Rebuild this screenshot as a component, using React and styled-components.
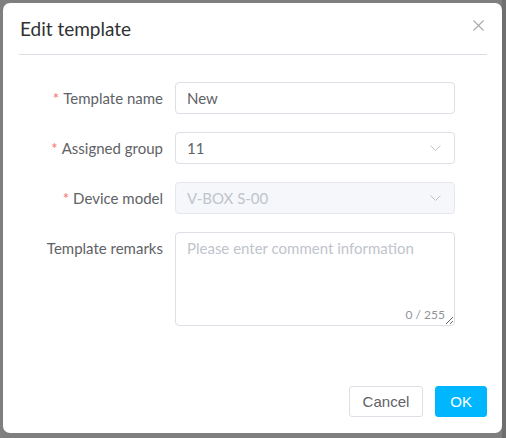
import styled, { createGlobalStyle } from "styled-components";

const GlobalStyle = createGlobalStyle`
  html, body {
    margin: 0;
    padding: 0;
    background: #7f7f7f;
  }
  * {
    box-sizing: border-box;
  }
`;

const fields = [
  { label: "Template name", required: true, kind: "input", value: "New" },
  { label: "Assigned group", required: true, kind: "select", value: "11" },
  { label: "Device model", required: true, kind: "select", value: "V-BOX S-00", disabled: true },
];

const font = `"Source Sans Pro", Lato, "Noto Sans", sans-serif`;

export default function App() {
  return (
    <>
      <GlobalStyle />
      <Backdrop>
        <Dialog>
          <Header>
            <Title>Edit template</Title>
            <CloseButton aria-label="close">
              <svg width="11" height="11" viewBox="0 0 11 11">
                <path d="M0.5 0.5 L10.5 10.5 M10.5 0.5 L0.5 10.5" stroke="#a6a9ad" strokeWidth="1.1" fill="none" />
              </svg>
            </CloseButton>
          </Header>

          <Form>
            {fields.map((f) => (
              <Row key={f.label}>
                <Label required={f.required}>{f.label}</Label>
                {f.kind === "input" ? (
                  <Input defaultValue={f.value} />
                ) : (
                  <Select disabled={f.disabled}>
                    <span>{f.value}</span>
                    <svg width="11" height="6" viewBox="0 0 11 6">
                      <path d="M0.5 0.5 L5.5 5.5 L10.5 0.5" stroke="#c0c4cc" strokeWidth="1" fill="none" />
                    </svg>
                  </Select>
                )}
              </Row>
            ))}
            <Row>
              <Label>Template remarks</Label>
              <AreaWrap>
                <TextArea placeholder="Please enter comment information" />
                <Counter>0 / 255</Counter>
              </AreaWrap>
            </Row>
          </Form>

          <Footer>
            <Button>Cancel</Button>
            <Button primary>OK</Button>
          </Footer>
        </Dialog>
      </Backdrop>
    </>
  );
}

const Backdrop = styled.div`
  width: 506px;
  height: 438px;
  padding: 3px 4px 5px 3px;
  background: #7f7f7f;
  border-right: 4px solid #6f6f6f;
`;

const Dialog = styled.div`
  width: 499px;
  height: 430px;
  background: #ffffff;
  border-radius: 7px;
  display: flex;
  flex-direction: column;
`;

const Header = styled.div`
  position: relative;
  height: 52px;
  margin: 0 15px 0 16px;
  border-bottom: 1px solid #dcdfe6;
  display: flex;
  align-items: center;
`;

const Title = styled.h1`
  margin: 0 0 0 1px;
  font-family: ${font};
  font-weight: 400;
  font-size: 19px;
  color: #303133;
`;

const CloseButton = styled.div`
  position: absolute;
  right: 3px;
  top: 17px;
  width: 11px;
  height: 11px;
  display: flex;
`;

const Form = styled.div`
  padding: 27px 0 0 16px;
  display: flex;
  flex-direction: column;
  gap: 18px;
`;

const Row = styled.div`
  display: flex;
  align-items: flex-start;
`;

const Label = styled.label`
  width: 156px;
  padding-right: 12px;
  text-align: right;
  line-height: 32px;
  font-family: ${font};
  font-size: 15px;
  color: #606266;
  &::before {
    content: ${(p) => (p.required ? '"*"' : "none")};
    color: #f56c6c;
    margin-right: 4px;
  }
`;

const Input = styled.input`
  width: 280px;
  height: 32px;
  padding: 0 11px;
  border: 1px solid #dcdfe6;
  border-radius: 4px;
  outline: none;
  font-family: ${font};
  font-size: 15px;
  color: #606266;
`;

const Select = styled.div`
  width: 280px;
  height: 32px;
  padding: 0 13px 0 11px;
  border: 1px solid ${(p) => (p.disabled ? "#e4e7ed" : "#dcdfe6")};
  border-radius: 4px;
  background: ${(p) => (p.disabled ? "#f5f7fa" : "#ffffff")};
  display: flex;
  align-items: center;
  justify-content: space-between;
  font-family: ${font};
  font-size: 15px;
  color: ${(p) => (p.disabled ? "#c0c4cc" : "#606266")};
`;

const AreaWrap = styled.div`
  position: relative;
  width: 280px;
  height: 94px;
`;

const TextArea = styled.textarea`
  width: 100%;
  height: 100%;
  padding: 5px 11px;
  border: 1px solid #dcdfe6;
  border-radius: 4px;
  outline: none;
  font-family: ${font};
  font-size: 15px;
  line-height: 20px;
  color: #606266;
  &::placeholder {
    color: #c0c4cc;
  }
`;

const Counter = styled.span`
  position: absolute;
  right: 10px;
  bottom: 4px;
  font-family: ${font};
  font-size: 12px;
  color: #909399;
`;

const Footer = styled.div`
  margin-top: auto;
  padding: 0 15px 16px 0;
  display: flex;
  justify-content: flex-end;
  gap: 12px;
`;

const Button = styled.button`
  height: 31px;
  padding: 0 ${(p) => (p.primary ? "14px" : "13px")};
  border: 1px solid ${(p) => (p.primary ? "#00b7ff" : "#dcdfe6")};
  border-radius: 3px;
  background: ${(p) => (p.primary ? "#00b7ff" : "#ffffff")};
  color: ${(p) => (p.primary ? "#ffffff" : "#606266")};
  font-family: "Liberation Sans", Arial, sans-serif;
  font-size: 15px;
`;
